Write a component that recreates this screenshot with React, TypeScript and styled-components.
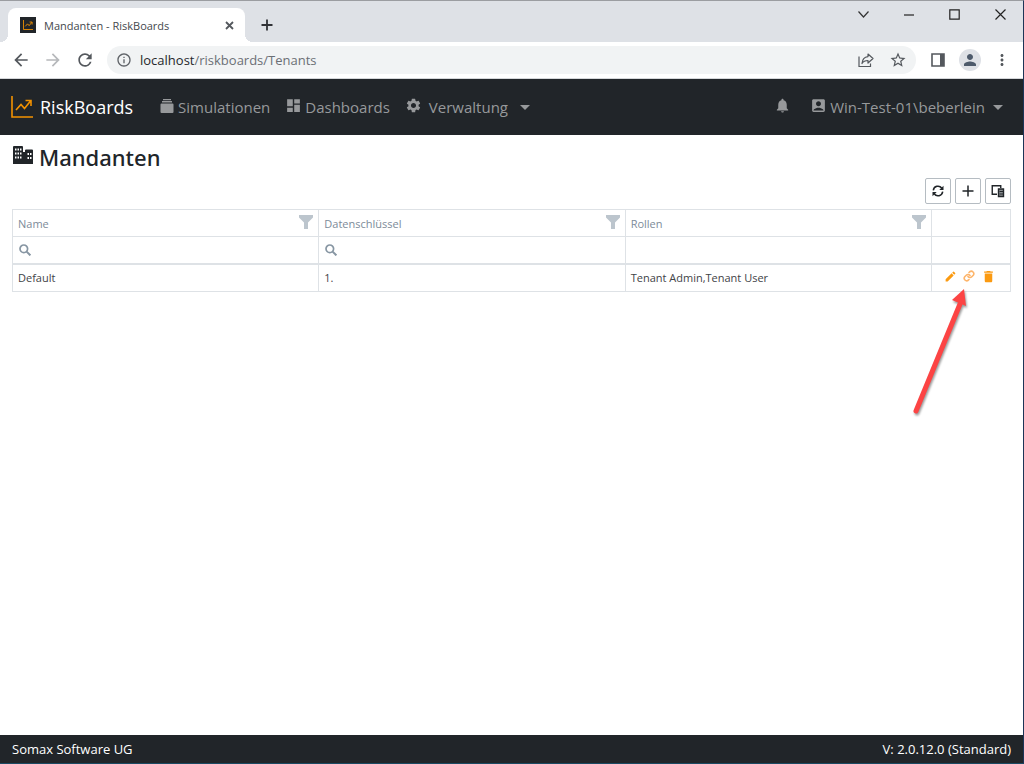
import React from "react";
import styled, { createGlobalStyle } from "styled-components";
import {
  MdAccountBox,
  MdArrowBack,
  MdArrowForward,
  MdDashboard,
  MdDelete,
  MdEdit,
  MdInfoOutline,
  MdMoreVert,
  MdNotifications,
  MdPerson,
  MdRefresh,
  MdSettings,
  MdStarBorder,
} from "react-icons/md";

const GlobalStyle = createGlobalStyle`
  *, *::before, *::after { box-sizing: border-box; }
  body {
    margin: 0;
    background: #fff;
    color: #212529;
    font-family: "Open Sans", "Noto Sans", sans-serif;
  }
  button { font: inherit; color: inherit; background: none; border: 0; padding: 0; }
  a { color: inherit; text-decoration: none; }
  svg { display: block; flex: none; }
`;

const Window = styled.div`
  min-height: 100vh;
  display: flex;
  flex-direction: column;
  border-top: 1px solid #9b9da1;
  border-right: 1px solid #1d3557;
  border-bottom: 1px solid #1c4a63;
`;

const TabStrip = styled.div`
  display: flex;
  align-items: flex-end;
  height: 41px;
  padding-left: 8px;
  background: #dee1e6;
`;

const BrowserTab = styled.div`
  position: relative;
  display: flex;
  align-items: center;
  width: 237px;
  height: 34px;
  padding: 0 10px 0 12px;
  border-radius: 8px 8px 0 0;
  background: #fff;
  color: #45494d;
  &::before,
  &::after {
    content: "";
    position: absolute;
    bottom: 0;
    width: 8px;
    height: 8px;
  }
  &::before {
    left: -8px;
    background: radial-gradient(circle at 0 0, transparent 8px, #fff 8px);
  }
  &::after {
    right: -8px;
    background: radial-gradient(circle at 100% 0, transparent 8px, #fff 8px);
  }
`;

const Favicon = styled.span`
  display: grid;
  place-items: center;
  width: 16px;
  height: 16px;
  margin-right: 8px;
  background: #212529;
`;

const TabTitle = styled.span`
  flex: 1;
  font-size: 11px;
  white-space: nowrap;
`;

const IconButton = styled.button<{ $w?: number; $h?: number; $color?: string }>`
  display: flex;
  align-items: center;
  justify-content: center;
  width: ${(p) => p.$w ?? 32}px;
  height: ${(p) => p.$h ?? 32}px;
  flex: none;
  color: ${(p) => p.$color ?? "#54585d"};
`;

const WindowControls = styled.div`
  display: flex;
  align-self: flex-start;
  margin-left: auto;
`;

const AddressBar = styled.div`
  display: flex;
  align-items: center;
  height: 37px;
  padding: 0 5px;
  border-bottom: 1px solid #d5d7da;
  background: #fff;
`;

const Omnibox = styled.div`
  display: flex;
  flex: 1;
  align-items: center;
  height: 28px;
  margin: 0 6px;
  padding: 0 2px 0 9px;
  border-radius: 14px;
  background: #f1f3f4;
`;

const Url = styled.span`
  flex: 1;
  margin-left: 8px;
  font-size: 13px;
  color: #6b6f74;
  b {
    font-weight: 400;
    color: #26282b;
  }
`;

const Avatar = styled.span`
  display: grid;
  place-items: center;
  width: 22px;
  height: 22px;
  border-radius: 50%;
  background: #dee1e6;
`;

const Navbar = styled.nav`
  display: flex;
  align-items: center;
  height: 56px;
  padding: 0 20px 0 11px;
  background: #212529;
  color: #97999b;
`;

const Brand = styled.a`
  display: flex;
  align-items: center;
  gap: 7px;
  margin-right: 27px;
  font-size: 18px;
  font-weight: 500;
  color: #fff;
`;

const NavItem = styled.a<{ $gap?: number }>`
  display: flex;
  align-items: center;
  gap: ${(p) => p.$gap ?? 4}px;
  margin-right: 15px;
  font-size: 15px;
  white-space: nowrap;
  > svg { margin-bottom: 3px; }
`;

const NavEnd = styled.div`
  display: flex;
  align-items: center;
  gap: 19px;
  margin-left: auto;
  ${NavItem} { margin-right: 0; }
`;

const Caret = styled.span`
  width: 0;
  height: 0;
  margin-left: 5px;
  border: 5px solid transparent;
  border-top: 5px solid currentColor;
  border-bottom: 0;
`;

const Main = styled.main`
  flex: 1;
  padding: 0 12px;
`;

const Heading = styled.h1`
  display: flex;
  align-items: center;
  gap: 5px;
  height: 43px;
  margin: 0;
  font-family: "Noto Sans", "Open Sans", sans-serif;
  font-size: 22px;
  font-weight: 500;
  > svg { margin-bottom: 4px; }
`;

const Toolbar = styled.div`
  display: flex;
  justify-content: flex-end;
  gap: 4px;
  margin-bottom: 5px;
`;

const ToolButton = styled.button`
  display: grid;
  place-items: center;
  width: 26px;
  height: 26px;
  border: 1px solid #b5bcc2;
  border-radius: 2px;
`;

const GridWrap = styled.div`
  position: relative;
`;

const Grid = styled.table`
  width: 100%;
  table-layout: fixed;
  border-collapse: collapse;
  font-size: 11px;
  th,
  td {
    height: 27px;
    padding: 0 5px;
    border: 1px solid #dee2e6;
    text-align: left;
    font-weight: 400;
  }
  thead { color: #7d8b99; }
  tbody td {
    height: 28px;
    border-top: 2px solid #dee2e6;
    color: #3f4347;
  }
`;

const ActionCol = styled.col`
  width: 79px;
`;

const HeaderCell = styled.div`
  display: flex;
  align-items: center;
  justify-content: space-between;
  > svg { margin-bottom: 2px; }
`;

const FilterLabel = styled.label`
  display: flex;
  align-items: center;
  gap: 4px;
  padding-left: 1px;
`;

const FilterInput = styled.input`
  flex: 1;
  min-width: 0;
  height: 20px;
  border: 0;
  padding: 0;
  background: transparent;
  font: inherit;
  outline: none;
`;

const RowActions = styled.div`
  display: flex;
  justify-content: center;
  align-items: center;
  gap: 7px;
  padding-bottom: 3px;
  margin-right: 4px;
`;

const Pointer = styled.svg`
  position: absolute;
  top: 76px;
  right: 36px;
  pointer-events: none;
  filter: drop-shadow(1px 2px 1px rgba(0, 0, 0, 0.4));
`;

const Footer = styled.footer`
  display: flex;
  align-items: center;
  justify-content: space-between;
  height: 28px;
  padding: 0 12px;
  background: #212529;
  color: #fff;
  font-size: 13px;
`;

const ChartLogo = ({ size, stroke }: { size: number; stroke: number }) => (
  <svg width={size} height={size} viewBox="0 0 22 22" fill="none" stroke="#f39200" strokeWidth={stroke}>
    <path d="M1 0V21H22" />
    <path d="M5 14L10 8.500L13.500 12.500L19.500 5M14.500 4.500H20V10" />
  </svg>
);

const StackIcon = () => (
  <svg width="14" height="14" viewBox="0 0 14 14" fill="currentColor">
    <path d="M3 0H11V1.200H3ZM2 2H12V3.400H2ZM1.500 4.400H12.500Q13.500 4.400 13.500 5.400V13Q13.500 14 12.500 14H1.500Q.5 14 .5 13V5.400Q.5 4.400 1.500 4.400Z" />
  </svg>
);

const BuildingIcon = () => (
  <svg width="22" height="18" viewBox="0 0 22 18" fill="#212529" fillRule="evenodd">
    <path d="M2 0H10Q11 0 11 1V6H13V4.500Q13 3.500 14 3.500H20Q21 3.500 21 4.500V18H1V1Q1 0 2 0ZM3 2.500V4.500H4.500V2.500ZM5.500 2.500V4.500H7V2.500ZM8 2.500V4.500H9.500V2.500ZM3 6.500V8.500H4.500V6.500ZM5.500 6.500V8.500H7V6.500ZM8 6.500V8.500H9.500V6.500ZM3 10.500V12.500H4.500V10.500ZM5.500 10.500V12.500H7V10.500ZM8 10.500V12.500H9.500V10.500ZM15.500 7V9H17V7ZM18 7V9H19.500V7ZM15.500 11V13H17V11ZM18 11V13H19.500V11Z" />
  </svg>
);

const FunnelIcon = () => (
  <svg width="14" height="14" viewBox="0 0 14 14" fill="#bcc5cd">
    <path d="M0 0H14V2.500L9 7.500V14H5V7.500L0 2.500Z" />
  </svg>
);

const SearchIcon = () => (
  <svg width="12" height="12" viewBox="0 0 12 12" fill="none" stroke="#8796a3">
    <circle cx="4.800" cy="4.800" r="3.800" strokeWidth="1.700" />
    <path d="M7.600 7.600L11.400 11.400" strokeWidth="2" />
  </svg>
);

const SyncIcon = () => (
  <svg width="12" height="12" viewBox="0 0 12 12" fill="none" stroke="currentColor" strokeWidth="1.500">
    <path d="M1.300 5.300A4.700 4.700 0 0 1 9.800 3.200M10.700 6.700A4.700 4.700 0 0 1 2.200 8.800" />
    <path d="M11.500 .8V5H7.300ZM.5 11.200V7H4.700Z" fill="currentColor" stroke="none" />
  </svg>
);

const PlusIcon = ({ size, stroke }: { size: number; stroke: number }) => (
  <svg width={size} height={size} viewBox="0 0 12 12" fill="none" stroke="currentColor" strokeWidth={stroke}>
    <path d="M6 .5V11.500M.5 6H11.500" />
  </svg>
);

const ColumnsIcon = () => (
  <svg width="14" height="14" viewBox="0 0 14 14" fill="none" stroke="currentColor" strokeWidth="1.400">
    <path d="M6 10.250H1.250V1.750H9.750V4" />
    <path d="M7.500 5H12.500V12.500H7.500Z" fill="#8a8e91" />
    <path d="M8.500 7.500H12M8.500 10H12" strokeWidth="1" />
  </svg>
);

const LinkIcon = () => (
  <svg width="12" height="12" viewBox="0 0 24 24" fill="none" stroke="#fdb56b" strokeWidth="3.200" strokeLinecap="round">
    <path d="M10 13a5 5 0 0 0 7.500.5l3-3a5 5 0 0 0-7-7L12 5M14 11a5 5 0 0 0-7.500-.5l-3 3a5 5 0 0 0 7 7L12 19" />
  </svg>
);

const ShareIcon = () => (
  <svg width="16" height="16" viewBox="0 0 16 16" fill="none" stroke="currentColor" strokeWidth="1.200">
    <path d="M1 4.500V14.500H12.500V11.500" />
    <path d="M10 2L15 6.500L10 11V8.500C7 8.500 5.200 9.500 4 11.500C4.300 7.500 6.500 5 10 4.600Z" strokeLinejoin="round" />
  </svg>
);

const columns = ["Name", "Datenschlüssel", "Rollen"];
const tenants = [{ name: "Default", key: "1.", roles: "Tenant Admin,Tenant User" }];

export default function App() {
  return (
    <Window>
      <GlobalStyle />
      <TabStrip>
        <BrowserTab>
          <Favicon>
            <ChartLogo size={10} stroke={2} />
          </Favicon>
          <TabTitle>Mandanten - RiskBoards</TabTitle>
          <IconButton $w={12} $h={12} aria-label="Close tab">
            <svg width="9" height="9" viewBox="0 0 9 9" stroke="currentColor" strokeWidth="1.800">
              <path d="M1 1L8 8M8 1L1 8" />
            </svg>
          </IconButton>
        </BrowserTab>
        <IconButton $w={44} $h={34} $color="#303236" aria-label="New tab">
          <PlusIcon size={12} stroke={1.8} />
        </IconButton>
        <WindowControls>
          <IconButton $w={46} $h={27} $color="#333" aria-label="Search tabs">
            <svg width="11" height="7" viewBox="0 0 11 7" fill="none" stroke="currentColor" strokeWidth="1.200">
              <path d="M.5 .5L5.500 6L10.500 .5" />
            </svg>
          </IconButton>
          <IconButton $w={46} $h={27} $color="#222" aria-label="Minimize">
            <svg width="10" height="2" viewBox="0 0 10 2">
              <path d="M0 1H10" stroke="currentColor" strokeWidth="1.200" />
            </svg>
          </IconButton>
          <IconButton $w={45} $h={27} $color="#222" aria-label="Maximize">
            <svg width="11" height="11" viewBox="0 0 11 11" fill="none" stroke="currentColor" strokeWidth="1.200">
              <path d="M.8 .8H10.200V10.200H.8Z" />
            </svg>
          </IconButton>
          <IconButton $w={46} $h={27} $color="#222" aria-label="Close window">
            <svg width="11" height="11" viewBox="0 0 11 11" stroke="currentColor" strokeWidth="1.200">
              <path d="M.5 .5L10.500 10.500M10.500 .5L.5 10.500" />
            </svg>
          </IconButton>
        </WindowControls>
      </TabStrip>
      <AddressBar>
        <IconButton aria-label="Back">
          <MdArrowBack size={20} />
        </IconButton>
        <IconButton $color="#b6b8bb" aria-label="Forward">
          <MdArrowForward size={20} />
        </IconButton>
        <IconButton aria-label="Reload">
          <MdRefresh size={20} />
        </IconButton>
        <Omnibox>
          <MdInfoOutline size={16} color="#5f6368" />
          <Url>
            <b>localhost</b>/riskboards/Tenants
          </Url>
          <IconButton aria-label="Share">
            <ShareIcon />
          </IconButton>
          <IconButton aria-label="Bookmark">
            <MdStarBorder size={18} />
          </IconButton>
        </Omnibox>
        <IconButton aria-label="Side panel">
          <svg width="14" height="14" viewBox="0 0 14 14">
            <path d="M1 1H13V13H1Z" fill="none" stroke="currentColor" strokeWidth="1.600" />
            <path d="M9 1H13V13H9Z" fill="currentColor" />
          </svg>
        </IconButton>
        <IconButton $color="#4d5a6b" aria-label="Profile">
          <Avatar>
            <MdPerson size={18} />
          </Avatar>
        </IconButton>
        <IconButton aria-label="Menu">
          <MdMoreVert size={18} />
        </IconButton>
      </AddressBar>
      <Navbar>
        <Brand href="#">
          <ChartLogo size={22} stroke={1.6} />
          RiskBoards
        </Brand>
        <NavItem href="#">
          <StackIcon />
          Simulationen
        </NavItem>
        <NavItem href="#" $gap={3}>
          <MdDashboard size={17} />
          Dashboards
        </NavItem>
        <NavItem href="#" $gap={7}>
          <MdSettings size={17} />
          Verwaltung
          <Caret />
        </NavItem>
        <NavEnd>
          <NavItem href="#" aria-label="Notifications">
            <MdNotifications size={17} />
          </NavItem>
          <NavItem href="#" $gap={3}>
            <MdAccountBox size={17} />
            Win-Test-01\beberlein
            <Caret />
          </NavItem>
        </NavEnd>
      </Navbar>
      <Main>
        <Heading>
          <BuildingIcon />
          Mandanten
        </Heading>
        <Toolbar>
          <ToolButton aria-label="Refresh">
            <SyncIcon />
          </ToolButton>
          <ToolButton aria-label="Add">
            <PlusIcon size={12} stroke={1.5} />
          </ToolButton>
          <ToolButton aria-label="Choose columns">
            <ColumnsIcon />
          </ToolButton>
        </Toolbar>
        <GridWrap>
          <Grid>
            <colgroup>
              <col />
              <col />
              <col />
              <ActionCol />
            </colgroup>
            <thead>
              <tr>
                {columns.map((c) => (
                  <th key={c} scope="col">
                    <HeaderCell>
                      {c}
                      <FunnelIcon />
                    </HeaderCell>
                  </th>
                ))}
                <td />
              </tr>
              <tr>
                {columns.map((c) => (
                  <td key={c}>
                    {c !== "Rollen" && (
                      <FilterLabel>
                        <SearchIcon />
                        <FilterInput aria-label={c} />
                      </FilterLabel>
                    )}
                  </td>
                ))}
                <td />
              </tr>
            </thead>
            <tbody>
              {tenants.map((t) => (
                <tr key={t.name}>
                  <td>{t.name}</td>
                  <td>{t.key}</td>
                  <td>{t.roles}</td>
                  <td>
                    <RowActions>
                      <IconButton $w={12} $h={12} $color="#fb9a11" aria-label="Edit">
                        <MdEdit size={13} />
                      </IconButton>
                      <IconButton $w={12} $h={12} aria-label="Link">
                        <LinkIcon />
                      </IconButton>
                      <IconButton $w={12} $h={12} $color="#fb9a11" aria-label="Delete">
                        <MdDelete size={15} />
                      </IconButton>
                    </RowActions>
                  </td>
                </tr>
              ))}
            </tbody>
          </Grid>
          <Pointer width="70" height="136" viewBox="0 0 70 136">
            <path d="M11 126L55 19" stroke="#fc4444" strokeWidth="5" strokeLinecap="round" />
            <path d="M59 4L47 15L61 21Z" fill="#fc4444" />
          </Pointer>
        </GridWrap>
      </Main>
      <Footer>
        <span>Somax Software UG</span>
        <span>V: 2.0.12.0 (Standard)</span>
      </Footer>
    </Window>
  );
}
